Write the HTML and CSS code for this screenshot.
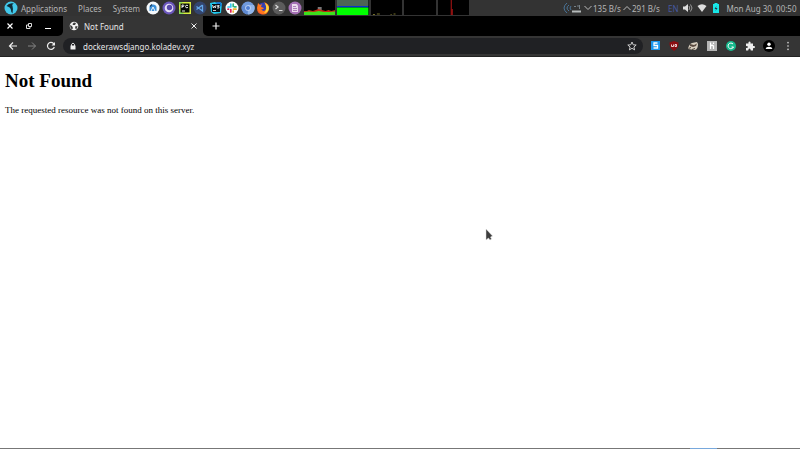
FILE: index.html
```
<!DOCTYPE html>
<html lang="en">
<head>
    <meta charset="UTF-8">
    <meta name="viewport" content="width=device-width, initial-scale=1.0">
    <title>Not Found</title>
    <link rel="stylesheet" href="styles.css">
</head>
<body>
    <header class="panel">
        <svg class="logo" viewBox="0 0 14 14"><circle cx="7" cy="7" r="6.500" fill="#42c8ea"/><path d="M2.500 5Q5 1.500 10 2.500Q7.500 3.500 8.500 5Q9.500 8 8.500 12.500Q7 12 7 9Q6.500 6 2.500 5Z" fill="#102a35"/></svg>
        <nav class="menus">
            <button>Applications</button>
            <button>Places</button>
            <button>System</button>
        </nav>
        <div class="launchers">
            <button aria-label="Android Studio"><svg viewBox="0 0 14 14"><circle cx="7" cy="7" r="6.500" fill="#f4f8fb"/><path d="M3.500 10V6Q4 3.500 7 3.500T10.500 6V10Z" fill="#3a8fd8"/><path d="M5 10L7 6L9 10" fill="none" stroke="#f4f8fb"/><path d="M4 5.500L6 3.500" stroke="#183f65" stroke-width="1.300"/></svg></button>
            <button aria-label="Insomnia"><svg viewBox="0 0 14 14"><circle cx="7" cy="7" r="6.500" fill="#6a56bb"/><circle cx="7" cy="7" r="4.300" fill="#e5e0f6"/><circle cx="7.500" cy="6.500" r="2.700" fill="#5948aa"/></svg></button>
            <button aria-label="PyCharm"><svg viewBox="0 0 14 14"><path d="M1 1H13V13H1Z" fill="#d7ed3e"/><path d="M1 4L5 1H1ZM1 13V8L6 13Z" fill="#8ee05a"/><path d="M2.500 2.500H11.500V11.500H2.500Z" fill="#080c08"/><path d="M4 7V4H5.500Q6.500 5 5.500 5.500H4M10 4.500Q7.500 3.500 7.500 5.500T10 6.500M4 10H7" fill="none" stroke="#fff" stroke-width=".9"/></svg></button>
            <button aria-label="VS Code"><svg viewBox="0 0 14 14"><circle cx="7" cy="7" r="6.500" fill="#33456e"/><path d="M9.500 4V10L3.500 5.500M3.500 8.500L9.500 4" fill="none" stroke="#63a7e8" stroke-width="1.300"/></svg></button>
            <button aria-label="WebStorm"><svg viewBox="0 0 14 14"><path d="M1 2L6 1L9 3L13 2L12 12L5 13L2 11Z" fill="#20c8ed"/><path d="M7 1L12 1L13 5L9 6Z" fill="#1478d0"/><path d="M3 3H11V11H3Z" fill="#071016"/><path d="M3.500 4L4.300 7L5.300 5L6.300 7L7 4M10.500 4.500H8.500V5.500H10V7H8M4 9.500H7" fill="none" stroke="#fff" stroke-width=".8"/></svg></button>
            <button aria-label="Slack"><svg viewBox="0 0 14 14"><circle cx="7" cy="7" r="6.500" fill="#fff"/><g fill="none" stroke-width="1.700" stroke-linecap="round"><path d="M5.800 3V6M3 6H5" stroke="#36c5f0"/><path d="M8.200 3V5.500M9.500 5.800H11" stroke="#2eb67d"/><path d="M8.500 8.200H11M8.200 10V11" stroke="#ecb22e"/><path d="M3 8.200H3.500M5.800 8.500V11" stroke="#e01e5a"/></g></svg></button>
            <button aria-label="Chromium"><svg viewBox="0 0 14 14"><circle cx="7" cy="7" r="6.500" fill="#719bdd"/><path d="M7 7L1.500 4A6.500 6.500 0 0 0 6 13.400Z" fill="#5f8ad2"/><path d="M7 4H13A6.500 6.500 0 0 1 7 13.500Z" fill="#91b5ea"/><circle cx="7" cy="7" r="2.800" fill="#c4d6f5"/><circle cx="7" cy="7" r="2" fill="#4f7fd4"/></svg></button>
            <button aria-label="Firefox"><svg viewBox="0 0 14 14"><circle cx="7.300" cy="7" r="5.500" fill="#3540b0"/><path d="M2 2L4 4L6 3L5 6L8 7Q7 9 5 8Q8 12 10 8Q11 5 8 1Q14 3 13 8Q12 13.500 7 13.500Q1 13 1 7Z" fill="#ff761d"/><path d="M9 2Q14 5 12.500 9Q11 12 8 12Q12 9 9 2Z" fill="#ffd53c"/><path d="M1 7Q2 12 7 13.500Q2 13 1 7Z" fill="#ed2450"/></svg></button>
            <button aria-label="Terminal"><svg viewBox="0 0 14 14"><circle cx="7" cy="7" r="6.500" fill="#5c5c5c"/><path d="M3.500 4L6 6L3.500 8M7 9.500H10.500" fill="none" stroke="#ddd" stroke-width="1.200"/></svg></button>
            <button aria-label="Text editor"><svg viewBox="0 0 14 14"><circle cx="7" cy="7" r="6.500" fill="#a571b5"/><path d="M4 3H8.500L10 4.500V11H4Z" fill="#eadbed"/><path d="M5 5.500H8M5 7.500H9M5 9.500H9" stroke="#9d6aac" stroke-width=".8"/></svg></button>
        </div>
        <div class="graphs">
            <svg viewBox="0 0 32 15" preserveAspectRatio="none"><path d="M14 10V7H18V10Z" fill="#777"/><path d="M0 15V11L3 11L5 10L9 11L12 10L15 9L18 10L22 11L25 10L28 11L32 10V15Z" fill="#c02b12"/><path d="M0 15V12L5 11.500L10 12L15 11L20 12L26 12L32 11.500V15Z" fill="#3de01c"/></svg>
            <svg viewBox="0 0 32 15" preserveAspectRatio="none"><path d="M0 0H32V6H0Z" fill="#4d6655"/><path d="M0 6H32V7.500H0Z" fill="#0931d0"/><path d="M0 7.500H32V15H0Z" fill="#0f0"/></svg>
            <svg viewBox="0 0 32 15" preserveAspectRatio="none"><path d="M2 14.500H4M6 14H9M20 14.500H21M23 14H25" stroke="#79732b"/></svg>
            <svg viewBox="0 0 32 15" preserveAspectRatio="none"></svg>
            <svg viewBox="0 0 32 15" preserveAspectRatio="none"><path d="M13.500 0V15M14.500 9V15" stroke="#b51515"/></svg>
        </div>
        <div class="tray">
            <svg class="modem" viewBox="0 0 20 12"><path d="M4 1Q-2 6 4 11M6 3Q2 6 6 9M8 4Q6 6 8 8" fill="none" stroke="#4a7599"/><path d="M9 8.500H18V10.500H9Z" fill="#b5baba"/><path d="M11 4.500H13M14 4H16M16.500 7V3" fill="none" stroke="#778188"/></svg>
            <svg class="arrow" viewBox="0 0 8 8"><path d="M.5 2L4 5.500L7.500 2" fill="none" stroke="#bbb"/></svg>
            <span class="rate">135 B/s</span>
            <svg class="arrow" viewBox="0 0 8 8"><path d="M.5 6L4 2.500L7.500 6" fill="none" stroke="#bbb"/></svg>
            <span class="rate">291 B/s</span>
            <span class="lang">EN</span>
            <svg class="tray-icon" viewBox="0 0 10 10"><path d="M0 3.500H2L5 1V9L2 6.500H0Z" fill="#ddd"/><path d="M6 3Q7.500 5 6 7M7.500 1.500Q10.500 5 7.500 8.500" fill="none" stroke="#999"/></svg>
            <svg class="tray-icon" viewBox="0 0 10 10"><path d="M0.500 3Q5 -.5 9.500 3L5 9Z" fill="#ddd"/></svg>
            <svg class="tray-icon" viewBox="0 0 10 10"><path d="M3.500 0H6.500V1H8V10H2V1H3.500Z" fill="#18e6e8"/><path d="M5.500 3L3.500 6H5L4.500 8L6.500 5H5Z" fill="#234"/></svg>
            <time class="clock">Mon Aug 30, 00:50</time>
        </div>
    </header>

    <div class="tabstrip">
        <div class="window-buttons">
            <button aria-label="Close window"><svg viewBox="0 0 8 8"><path d="M1.500 1.500L6.500 6.500M6.500 1.500L1.500 6.500" stroke="#fff" stroke-width="1.200"/></svg></button>
            <button aria-label="Restore window"><svg viewBox="0 0 8 8"><path d="M3.500 1.500H6.500V4.500H3.500ZM3 3H1.500V6.500H5V5" fill="none" stroke="#ddd"/></svg></button>
            <button aria-label="Minimize window"><svg viewBox="0 0 8 8"><path d="M1 6.500H7" stroke="#fff"/></svg></button>
        </div>
        <div class="tab">
            <svg class="favicon" viewBox="0 0 10 10"><circle cx="5" cy="5" r="4.300" fill="#f1f1f1"/><path d="M1 4L3 5L4 7L3 8.500Q1 7 1 4ZM5 1.500L7 2L6 4L4 4L3.500 3ZM6 5.500L8.500 5L8 7.500L6.500 8Z" fill="#3b3b3b"/></svg>
            <span class="tab-title">Not Found</span>
            <button aria-label="Close tab"><svg viewBox="0 0 8 8"><path d="M1.500 1.500L6.500 6.500M6.500 1.500L1.500 6.500" stroke="#eee"/></svg></button>
        </div>
        <button class="new-tab" aria-label="New tab"><svg viewBox="0 0 8 8"><path d="M4 .5V7.500M.5 4H7.500" stroke="#eee" stroke-width="1.200"/></svg></button>
    </div>

    <div class="toolbar">
        <div class="nav-buttons">
            <button aria-label="Back"><svg viewBox="0 0 10 10"><path d="M9 5H1.500M5 1.500L1.500 5L5 8.500" fill="none" stroke="#eee" stroke-width="1.200"/></svg></button>
            <button aria-label="Forward"><svg viewBox="0 0 10 10"><path d="M1 5H8.500M5 1.500L8.500 5L5 8.500" fill="none" stroke="#858585"/></svg></button>
            <button aria-label="Reload"><svg viewBox="0 0 10 10"><path d="M8.300 6A3.500 3.500 0 1 1 7.500 2.500L8.500 3.500" fill="none" stroke="#eee" stroke-width="1.200"/><path d="M9 1V4.500H5.500Z" fill="#eee"/></svg></button>
        </div>
        <div class="address">
            <svg class="lock" viewBox="0 0 8 8"><path d="M2.500 4V2.300Q4 -.2 5.500 2.300V4" fill="none" stroke="#eee" stroke-width=".9"/><path d="M1.500 3.500H6.500V7.500H1.500Z" fill="#eee"/></svg>
            <input type="text" aria-label="Address" value="dockerawsdjango.koladev.xyz">
            <button aria-label="Bookmark"><svg viewBox="0 0 10 10"><path d="M5 1L6.200 3.800L9.200 4L6.900 6L7.600 8.900L5 7.300L2.400 8.900L3.100 6L.8 4L3.800 3.800Z" fill="none" stroke="#ddd" stroke-width=".9"/></svg></button>
        </div>
        <div class="extensions">
            <button aria-label="Session extension"><svg viewBox="0 0 12 12"><path d="M2 1H11V10H2Z" fill="#1a96ee"/><path d="M8.500 3H5V5.500H8.500V8H4.500" fill="none" stroke="#fff" stroke-width="1.300"/></svg></button>
            <button aria-label="uBlock Origin"><svg viewBox="0 0 12 12"><path d="M6 1L10.500 2.500Q11 8 6 11Q1 8 1.500 2.500Z" fill="#8b0c12"/><path d="M3.500 4.500V6.500H5.500V4.500M7 4.500H8.500V6.500H7Z" fill="none" stroke="#fff" stroke-width=".8"/></svg></button>
            <button aria-label="Privacy Badger"><svg viewBox="0 0 12 12"><path d="M1 9Q2 4 5 3L10 2L11 4Q11 9 8 10Z" fill="#d8cfc0"/><path d="M3 4L7 5L10 3.500L9 6L6 7L3 6Z" fill="#5a4b40"/><path d="M1.500 8.500L4 7.500M5 9.500L8 8.500" stroke="#4b4138"/></svg></button>
            <button aria-label="Honey"><svg viewBox="0 0 12 12"><path d="M1 1H11V11H1Z" fill="#b5b5b5"/><path d="M4.500 2.500V9M4.500 6Q6 4.500 7.500 6V9M7.500 2.500V4" fill="none" stroke="#fff" stroke-width="1.200"/></svg></button>
            <button aria-label="Grammarly"><svg viewBox="0 0 12 12"><circle cx="6" cy="6" r="5" fill="#17b88d"/><path d="M8 4A2.800 2.800 0 1 0 8.500 7H6.500" fill="none" stroke="#fff"/></svg></button>
            <button aria-label="Extensions"><svg viewBox="0 0 12 12"><path d="M2 3.500H4.500Q4 1.500 5.500 1.500T6.500 3.500H9V6Q11 5.500 11 7T9 8V10.500H6.800Q6.500 8.500 5.500 8.500T4.200 10.500H2V8Q4 8 4 7T2 6Z" fill="#eee"/></svg></button>
            <button aria-label="Profile"><svg viewBox="0 0 12 12"><circle cx="6" cy="6" r="6" fill="#000"/><circle cx="6" cy="4.300" r="1.700" fill="#fff"/><path d="M2.700 9Q3 6.800 6 6.800T9.300 9Z" fill="#fff"/></svg></button>
            <button aria-label="Menu"><svg viewBox="0 0 12 12"><path d="M5.500 2H6.500V3.200H5.500ZM5.500 5.400H6.500V6.600H5.500ZM5.500 8.800H6.500V10H5.500Z" fill="#ddd" stroke="#ddd" stroke-width=".3"/></svg></button>
        </div>
    </div>

    <main>
        <h1>Not Found</h1>
        <p>The requested resource was not found on this server.</p>
        <svg class="cursor" viewBox="0 0 8 14"><path d="M1 1V12L3.500 10L5 12L6.500 11L5.500 9L7.500 8Z" fill="#3c3c3c" stroke="#ddd" stroke-width=".5"/></svg>
    </main>
    <footer><span></span></footer>
</body>
</html>
```

FILE: styles.css
```
* {
    box-sizing: border-box;
}
body {
    margin: 0;
    min-height: 100vh;
    display: flex;
    flex-direction: column;
    background: #fff;
    font-family: "Noto Sans", sans-serif;
    font-size: 8px;
}
svg {
    display: block;
    flex: none;
}
button {
    display: flex;
    align-items: center;
    justify-content: center;
    border: 0;
    padding: 0;
    background: none;
    color: inherit;
    font: inherit;
    flex: none;
}
.panel {
    display: flex;
    align-items: center;
    height: 16px;
    padding: 0 2px 0 4px;
    background: #333;
    color: #b5b5b5;
}
.logo {
    width: 14px;
    height: 14px;
}
.menus {
    display: flex;
    justify-content: space-between;
    width: 119px;
    margin: 0 6px 0 3px;
}
.launchers {
    display: flex;
    justify-content: space-between;
    width: 156px;
}
.launchers svg {
    width: 14px;
    height: 14px;
}
.graphs {
    display: grid;
    grid-template-columns: repeat(5, 1fr);
    gap: 2px;
    width: 165px;
    margin-left: 2px;
    align-self: flex-start;
}
.graphs svg {
    width: 100%;
    height: 15px;
    background: #000;
}
.tray {
    display: flex;
    align-items: center;
    margin-left: auto;
    white-space: nowrap;
}
.modem {
    width: 20px;
    height: 12px;
    margin-right: 1px;
}
.arrow {
    width: 8px;
    height: 8px;
    margin-right: 1px;
}
.rate {
    width: 30px;
}
.lang {
    width: 15px;
    margin-left: 6px;
    color: #4659a0;
}
.tray-icon {
    width: 10px;
    height: 10px;
    margin-right: 4px;
}
.clock {
    width: 73px;
    text-align: center;
}

/* browser chrome */
.tabstrip {
    display: flex;
    align-items: stretch;
    height: 20px;
    background: #353535;
    color: #e6e6e6;
}
.window-buttons {
    display: flex;
    align-items: center;
    gap: 11px;
    width: 63px;
    padding-left: 6px;
    background: #000;
    border-bottom-right-radius: 5px;
}
.tabstrip button svg {
    width: 8px;
    height: 8px;
}
.tab {
    display: flex;
    align-items: center;
    width: 140px;
    padding: 0 5px 0 6px;
}
.favicon {
    width: 10px;
    height: 10px;
    margin-right: 5px;
}
.tab-title {
    flex: 1;
}
.new-tab {
    flex: 1;
    justify-content: flex-start;
    padding-left: 9px;
    background: #000;
    border-bottom-left-radius: 5px;
}
.toolbar {
    display: flex;
    align-items: center;
    height: 21px;
    padding: 0 6px 0 8px;
    background: #353535;
    border-bottom: 1px solid #222;
}
.nav-buttons {
    display: flex;
    gap: 9px;
    width: 55px;
}
.nav-buttons svg,
.address button svg {
    width: 10px;
    height: 10px;
}
.address {
    display: flex;
    align-items: center;
    flex: 1;
    height: 16px;
    padding: 0 6px;
    border-radius: 8px;
    background: #202124;
}
.lock {
    width: 8px;
    height: 8px;
}
.address input {
    flex: 1;
    min-width: 0;
    margin-left: 6px;
    padding: 0;
    border: 0;
    background: none;
    color: #e6e6e6;
    font: inherit;
    outline: 0;
}
.extensions {
    display: flex;
    gap: 7px;
    margin-left: 6px;
}
.extensions svg {
    width: 12px;
    height: 12px;
}

/* page */
main {
    position: relative;
    flex: 1;
    padding: 13px 5px;
    font-family: "Liberation Serif", serif;
    color: #000;
}
h1 {
    margin: 0 0 12px;
    font-size: 19px;
    line-height: 22px;
}
p {
    margin: 0;
    font-size: 9px;
    line-height: 12px;
}
.cursor {
    position: absolute;
    left: 485px;
    top: 171px;
    width: 8px;
    height: 14px;
}
footer {
    display: flex;
    justify-content: flex-end;
    height: 1px;
    padding-right: 83px;
    background: #777;
}
footer span {
    width: 27px;
    background: #78a8dc;
}
```
